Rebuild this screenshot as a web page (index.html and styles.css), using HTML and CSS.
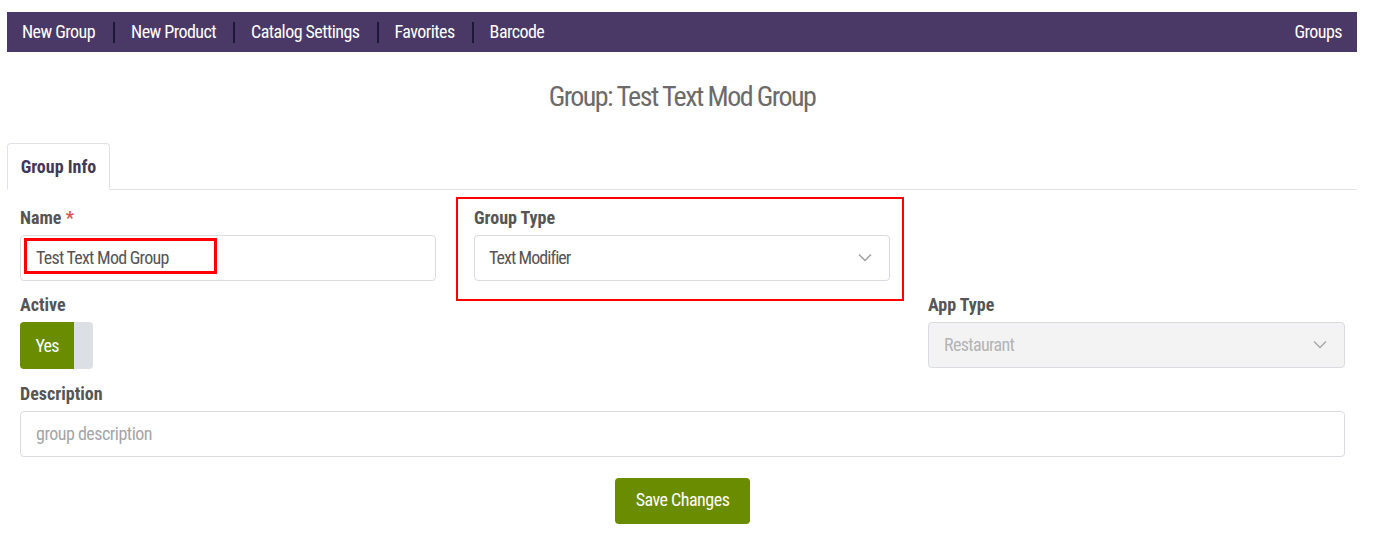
FILE: index.html
```html
<!DOCTYPE html>
<html lang="en">
<head>
<meta charset="utf-8">
<title>Group: Test Text Mod Group</title>
<link rel="stylesheet" href="styles.css">
</head>
<body>
<div class="page">
  <nav class="navbar">
    <ul class="nav-left">
      <li><a href="#">New Group</a></li>
      <li><a href="#">New Product</a></li>
      <li><a href="#">Catalog Settings</a></li>
      <li><a href="#">Favorites</a></li>
      <li><a href="#">Barcode</a></li>
    </ul>
    <a class="nav-right" href="#">Groups</a>
  </nav>

  <h1 class="title">Group: Test Text Mod Group</h1>

  <div class="tabs">
    <div class="tab active">Group Info</div>
  </div>

  <form class="form">
    <div class="field">
      <label class="label">Name <span class="req">*</span></label>
      <div class="input name-input">
        <span>Test Text Mod Group</span>
        <span class="annot-box"></span>
      </div>
    </div>
    <div class="field field-hl">
      <label class="label">Group Type</label>
      <div class="input select group-select">
        <span>Text Modifier</span>
        <svg class="chev" width="14" height="9" viewBox="0 0 14 9"><path d="M1 1.5 L7 7.5 L13 1.5" fill="none" stroke="#a0a0a0" stroke-width="1.5"/></svg>
      </div>
    </div>
    <div class="field"></div>

    <div class="field">
      <label class="label">Active</label>
      <div class="toggle"><span class="toggle-on">Yes</span><span class="toggle-off"></span></div>
    </div>
    <div class="field"></div>
    <div class="field">
      <label class="label">App Type</label>
      <div class="input select disabled">
        <span>Restaurant</span>
        <svg class="chev" width="14" height="9" viewBox="0 0 14 9"><path d="M1 1.5 L7 7.5 L13 1.5" fill="none" stroke="#a8a8a8" stroke-width="1.5"/></svg>
      </div>
    </div>

    <div class="field full">
      <label class="label">Description</label>
      <div class="input placeholder">group description</div>
    </div>

    <div class="actions">
      <button type="button" class="btn-save">Save Changes</button>
    </div>
  </form>
</div>
</body>
</html>
```
FILE: styles.css
```css
* { box-sizing: border-box; }
html, body { margin: 0; padding: 0; background: #fff; }
body {
  font-family: "Roboto Condensed", "Liberation Sans Narrow", "DejaVu Sans Condensed", Roboto, sans-serif;
  font-stretch: condensed;
  color: #555;
}
.page {
  width: 1350px;
  margin: 12px 0 0 7px;
}
.navbar {
  height: 40px;
  background: #4a3966;
  display: flex;
  align-items: center;
  justify-content: space-between;
  padding: 0 15px 0 0;
}
.nav-left {
  list-style: none;
  margin: 0;
  padding: 0;
  display: flex;
  align-items: center;
}
.nav-left li {
  display: flex;
  align-items: center;
}
.nav-left li + li { border-left: 2px solid #1d1838; }
.nav-left a, .nav-right {
  color: #fff;
  text-decoration: none;
  font-size: 18px;
  letter-spacing: -0.55px;
  line-height: 20px;
  padding: 0 17px 1px 16px;
}
.nav-left li:first-child a { padding-left: 15px; padding-right: 18px; }
.nav-right { padding: 0 0 1px; }
.title {
  margin: 28px 0 0;
  text-align: center;
  font-weight: 400;
  font-size: 28px;
  letter-spacing: -1.55px;
  line-height: 34px;
  color: #6b6b6b;
}
.tabs {
  margin-top: 29px;
  display: flex;
  border-bottom: 1px solid #dee2e6;
  height: 47px;
}
.tab {
  width: 103px;
  height: 47px;
  border: 1px solid #dee2e6;
  border-bottom-color: #fff;
  border-radius: 4px 4px 0 0;
  margin-bottom: -1px;
  background: #fff;
  font-weight: 700;
  font-size: 18px;
  color: #3f3a56;
  display: flex;
  align-items: center;
  justify-content: center;
}
.form {
  padding: 18px 12px 0 13px;
  display: grid;
  grid-template-columns: 416px 416px 417px;
  column-gap: 38px;
  row-gap: 14px;
}
.field { display: flex; flex-direction: column; }
.field-hl { position: relative; }
.field-hl::before {
  content: "";
  position: absolute;
  left: -18px; right: -14px; top: -11px; bottom: -20px;
  border: 2px solid #f00;
  pointer-events: none;
}
.full { grid-column: 1 / 4; margin-top: 1px; }
.label {
  font-weight: 700;
  font-size: 18px;
  line-height: 20px;
  color: #555;
  margin-bottom: 7px;
}
.req { color: #d9534f; }
.input {
  height: 46px;
  border: 1px solid #d8dbe0;
  border-radius: 4px;
  padding: 0 15px 2px;
  font-size: 18px;
  letter-spacing: -0.65px;
  color: #555;
  display: flex;
  align-items: center;
  background: #fff;
}
.name-input { position: relative; letter-spacing: -0.75px; }
.annot-box {
  position: absolute;
  left: 3px;
  top: 2px;
  width: 193px;
  height: 36px;
  border: 3px solid #f00;
}
.select { justify-content: space-between; padding-right: 17px; }
.group-select { letter-spacing: -0.95px; padding-left: 14px; }
.disabled { background: #f3f3f3; color: #b3b3b3; }
.placeholder { color: #a5a5a5; letter-spacing: -0.5px; }
.toggle {
  display: flex;
  width: 73px;
  height: 47px;
  border-radius: 4px;
  overflow: hidden;
}
.toggle-on {
  width: 54px;
  background: #6a8c00;
  color: #fff;
  font-size: 18px;
  letter-spacing: -0.8px;
  display: flex;
  align-items: center;
  justify-content: center;
  padding-bottom: 1px;
}
.toggle-off { flex: 1; background: #dcdfe3; }
.actions {
  grid-column: 1 / 4;
  display: flex;
  justify-content: center;
  margin-top: 7px;
}
.btn-save {
  font-family: inherit;
  font-stretch: condensed;
  background: #6a8c00;
  color: #fff;
  border: none;
  border-radius: 4px;
  height: 46px;
  width: 135px;
  font-size: 18px;
  letter-spacing: -0.5px;
  padding: 0 0 4px;
}
```
